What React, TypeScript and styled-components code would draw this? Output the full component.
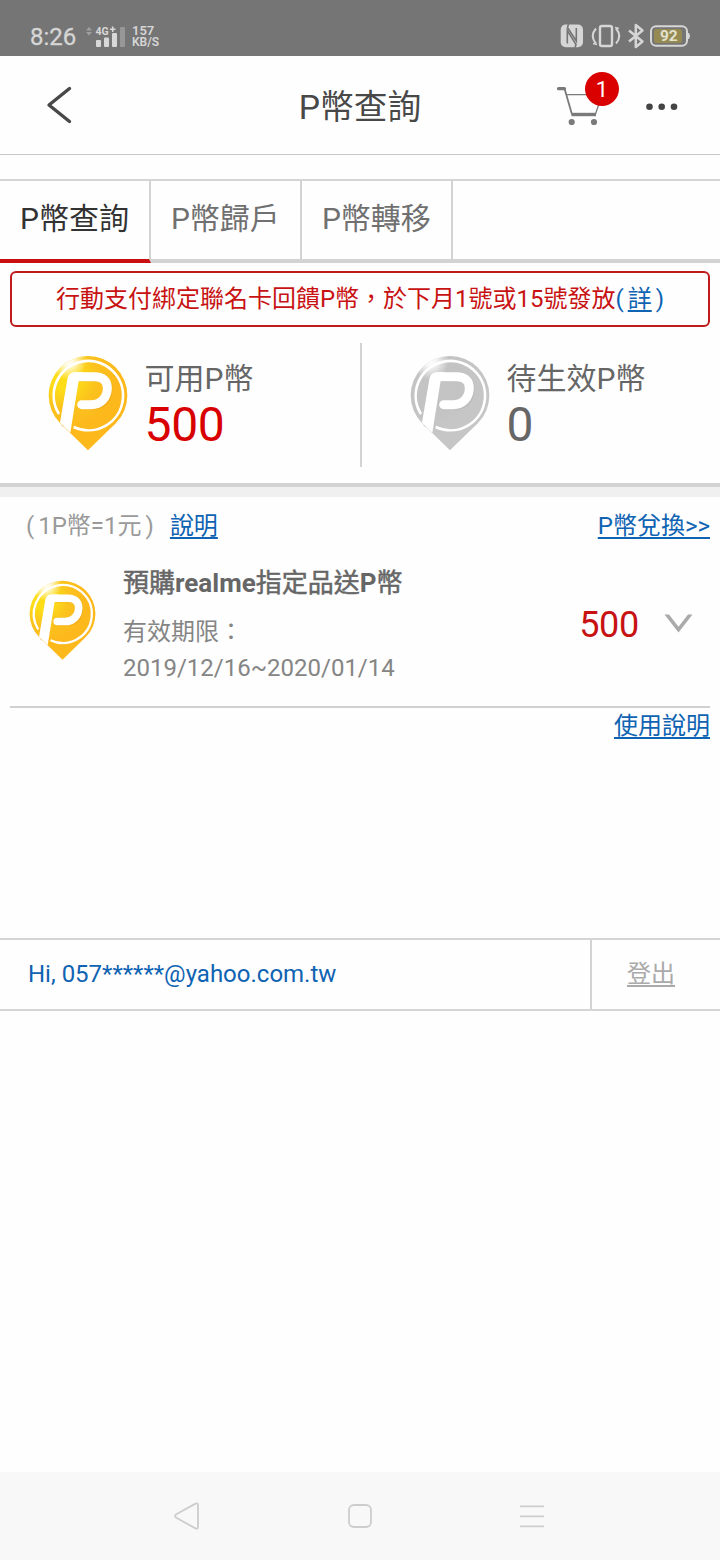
import React, { useId } from 'react';
import styled, { createGlobalStyle } from 'styled-components';

const GlobalStyle = createGlobalStyle`
  *, *::before, *::after { box-sizing: border-box; }
  body {
    margin: 0;
    background: #fefefe;
    font-family: Roboto, 'Noto Sans CJK TC', sans-serif;
    -webkit-font-smoothing: antialiased;
  }
`;

const Screen = styled.div`
  width: 720px;
  height: 1560px;
  display: flex;
  flex-direction: column;
  background: #fefefe;
  overflow: hidden;
  white-space: nowrap;
`;

const StatusBar = styled.div`
  height: 56px;
  flex: none;
  display: flex;
  justify-content: space-between;
  align-items: flex-start;
  padding: 23px 29px 0 30px;
  background: #757575;
  color: #d6d6d6;
`;

const StatusGroup = styled.div`
  display: flex;
`;

const Clock = styled.span`
  width: 55px;
  font-size: 24px;
  line-height: 29px;
  -webkit-text-stroke: 0.3px currentColor;
`;

const NetSpeed = styled.div`
  margin: 2px 0 0 7px;
  font-weight: 600;
  font-size: 13px;
  line-height: 11px;
  span { display: block; }
  span + span { font-size: 12px; line-height: 12px; }
`;

const Header = styled.header`
  height: 99px;
  flex: none;
  display: grid;
  grid-template-columns: 220px 1fr 220px;
  align-items: center;
  border-bottom: 1px solid #c8c8c8;
`;

const BackButton = styled.button`
  border: 0;
  background: none;
  padding: 0;
  margin-left: 46px;
  width: 28px;
  height: 40px;
  svg { display: block; }
`;

const Title = styled.h1`
  margin: 0;
  text-align: center;
  font-size: 33.7px;
  line-height: 40px;
  font-weight: 400;
  color: #484848;
  padding-top: 5px;
`;

const HeaderActions = styled.div`
  display: flex;
  height: 98px;
  padding-left: 55px;
`;

const CartButton = styled.div`
  position: relative;
  width: 66px;
  height: 98px;
  svg { display: block; margin-top: 28px; }
`;

const CartBadge = styled.span`
  position: absolute;
  left: 30px;
  top: 16px;
  width: 34px;
  height: 34px;
  border-radius: 50%;
  background: #da0000;
  color: #fff;
  font-size: 22px;
  line-height: 35px;
  text-align: center;
`;

const MoreIcon = styled.svg`
  margin: 46px 0 0 24px;
`;

const Tabs = styled.nav`
  height: 84px;
  flex: none;
  margin-top: 24px;
  display: flex;
  border-top: 2px solid #d5d5d5;
`;

const Tab = styled.div<{ $active?: boolean }>`
  height: 82px;
  padding: 0 20px;
  border-right: 2px solid #d3d3d3;
  border-bottom: 4px solid ${(p) => (p.$active ? '#c90f0f' : '#d3d3d3')};
  color: ${(p) => (p.$active ? '#333' : '#707070')};
  font-size: 30px;
  line-height: 76px;
`;

const TabFiller = styled.div`
  flex: 1;
  border-bottom: 4px solid #d3d3d3;
`;

const Notice = styled.div`
  height: 56px;
  flex: none;
  margin: 8px 10px 0;
  border: 2px solid #c01a1a;
  border-radius: 6px;
  text-align: center;
  font-size: 24px;
  line-height: 53px;
  color: #c81212;
`;

const NoticeDetail = styled.span`
  color: #0f63b3;
  a { margin: 0 4px; }
`;

const Link = styled.a`
  color: #0f63b3;
  text-decoration: underline;
  text-decoration-thickness: 2px;
  text-underline-offset: 3px;
`;

const Balances = styled.section`
  height: 160px;
  flex: none;
  display: flex;
  align-items: flex-start;
  padding-top: 16px;
  border-bottom: 4px solid #d3d3d3;
`;

const Balance = styled.div`
  width: 360px;
  height: 124px;
  display: flex;
  padding: 12px 0 0 48px;
  gap: 16.5px;
  & + & {
    border-left: 2px solid #d3d3d3;
  }
`;

const BalanceText = styled.div`
  padding-top: 4px;
`;

const BalanceLabel = styled.div`
  font-size: 30px;
  line-height: 40px;
  color: #666;
`;

const BalanceValue = styled.div<{ $accent?: boolean }>`
  margin-top: 1px;
  font-size: 48px;
  line-height: 50px;
  letter-spacing: -0.3px;
  color: ${(p) => (p.$accent ? '#d80000' : '#666')};
`;

const Band = styled.div`
  height: 10px;
  flex: none;
  background: #f0f0f0;
`;

const RateRow = styled.div`
  height: 57px;
  flex: none;
  display: flex;
  justify-content: space-between;
  padding: 0 10px 0 26px;
  font-size: 24px;
  line-height: 58px;
  color: #9a9a9a;
`;

const RateText = styled.span`
  margin: 0 4px;
`;

const RateLink = styled(Link)`
  margin-left: 16px;
`;

const CoinItem = styled.article`
  height: 154px;
  flex: none;
  margin: 0 10px;
  display: flex;
  border-bottom: 2px solid #d0d0d0;
`;

const ItemIcon = styled.div`
  width: 113px;
  padding: 26px 0 0 19px;
`;

const ItemBody = styled.div`
  flex: 1;
  padding-top: 11px;
  font-size: 24px;
  line-height: 36px;
  color: #858585;
`;

const ItemTitle = styled.h2`
  margin: 0 0 13px;
  font-size: 26px;
  line-height: 36px;
  font-weight: 700;
  color: #666;
`;

const Han = styled.span`
  font-weight: 400;
  -webkit-text-stroke: 0.5px currentColor;
`;

const ItemAmount = styled.div`
  padding: 51px 25px 0 0;
  font-size: 36px;
  line-height: 40px;
  letter-spacing: -0.3px;
  color: #c81212;
`;

const Chevron = styled.svg`
  margin: 60px 17px 0 0;
`;

const UsageRow = styled.div`
  flex: none;
  height: 230px;
  padding-right: 10px;
  text-align: right;
  font-size: 24px;
  line-height: 37px;
`;

const Account = styled.footer`
  height: 73px;
  flex: none;
  display: flex;
  border-top: 2px solid #d5d5d5;
  border-bottom: 2px solid #d5d5d5;
  font-size: 24px;
  line-height: 68px;
`;

const AccountName = styled.div`
  width: 592px;
  padding-left: 28px;
  border-right: 2px solid #d3d3d3;
  color: #0f63b3;
`;

const Logout = styled.a`
  flex: 1;
  padding-left: 35px;
  color: #aaa;
  text-decoration: underline;
  text-decoration-thickness: 2px;
  text-underline-offset: 3px;
`;

const SystemNav = styled.div`
  margin-top: auto;
  height: 88px;
  flex: none;
  background: #f8f8f8;
  display: flex;
  justify-content: space-between;
  align-items: center;
  padding: 0 175px 0 172px;
`;

function CoinPin({ width, muted }: { width: number; muted?: boolean }) {
  const id = useId().replace(/:/g, '');
  const light = muted ? '#c4c4c4' : '#fddd18';
  const mid = muted ? '#c3c3c3' : '#fbc21d';
  const deep = muted ? '#c6c6c6' : '#fdb81c';
  const shade = muted ? '#acacac' : '#e39a14';
  return (
    <svg width={width} height={width * 1.2} viewBox="145 45 240 288">
      <defs>
        <radialGradient id={`${id}b`} gradientUnits="userSpaceOnUse" cx="195" cy="110" r="160">
          <stop offset="0" stopColor={light} />
          <stop offset="0.25" stopColor={light} />
          <stop offset="0.6" stopColor={mid} />
          <stop offset="1" stopColor={deep} />
        </radialGradient>
        <radialGradient id={`${id}h`} gradientUnits="userSpaceOnUse" cx="205" cy="62" r="56">
          <stop offset="0" stopColor="#fff" />
          <stop offset="0.3" stopColor="#fff" stopOpacity="0.85" />
          <stop offset="1" stopColor="#fff" stopOpacity="0" />
        </radialGradient>
      </defs>
      <path d="M265 331 L181.500 249.500 A118 118 0 1 1 348.500 249.500 Z" fill={`url(#${id}b)`} />
      <path d="M178 222 A104 104 0 1 1 222 261" fill="none" stroke="#fff" strokeWidth="8" />
      <path d="M265 331 L181.500 249.500 A118 118 0 1 1 348.500 249.500 Z" fill={`url(#${id}h)`} />
      <g opacity="0.35" fill="none" stroke={shade} strokeWidth="27">
        <path d="M232 112 H287 Q325 112 325 148 Q325 196 276 196 H248" strokeLinecap="round" />
        <path d="M224 112 L199 262" />
      </g>
      <path d="M203 118 Q206 97 226 97 H250 L237 122 L212 278 L181 248 Z" fill="#fff" />
      <path d="M226 110 H285 C309 110 323 123 323 144 C323 174 302 194 274 194 H246" fill="none" stroke="#fff" strokeWidth="27" strokeLinecap="round" />
    </svg>
  );
}

const SignalIcon = () => (
  <svg width="40" height="26" viewBox="85 22 40 26">
    <path d="M86 29.500 L89 26 L92 29.500 Z M86 31 L89 34.500 L92 31 Z" fill="#a0a0a0" />
    <text x="95.500" y="34" fontSize="10.500" fontWeight="700" fontFamily="Roboto" fill="#d8d8d8">4G</text>
    <path d="M112.700 25.500 V31 M110 28.200 H115.500" stroke="#d8d8d8" strokeWidth="1.600" />
    <rect x="96" y="39" width="5" height="7" rx="1" fill="#d8d8d8" />
    <rect x="104" y="36.500" width="5" height="9.500" rx="1" fill="#d8d8d8" />
    <rect x="112" y="32" width="5" height="14" rx="1" fill="#d8d8d8" />
    <rect x="120" y="26" width="5" height="20" rx="1" fill="#979797" />
  </svg>
);

const StatusIcons = () => (
  <svg width="131" height="28" viewBox="560 23 131 28">
    <rect x="560.700" y="24.500" width="22.300" height="22.800" rx="5" fill="#d6d6d6" />
    <path d="M567.300 43.500 V30.500 L576 44.500 L575 47.500 M576.300 28 V41 L567.500 27.500 L568.500 24" fill="none" stroke="#757575" strokeWidth="1.600" />
    <g fill="none" stroke="#d6d6d6">
      <rect x="600" y="26" width="12" height="20" rx="2" strokeWidth="2.400" />
      <path d="M596 28.500 Q589.500 36 596 43.500 M616 28.500 Q622.500 36 616 43.500" strokeWidth="2" />
      <path d="M597 44.500 L593 43.500 M615 27.500 L619 28.500" strokeWidth="1.600" />
      <path d="M629 30.500 L642.500 41.500 L635.800 47 V25 L642.500 30.500 L629 41.500" strokeWidth="2.500" strokeLinejoin="round" />
      <rect x="651" y="26.200" width="36" height="19.600" rx="5" strokeWidth="2" />
    </g>
    <rect x="654" y="29" width="28" height="14" rx="2.500" fill="#958b52" />
    <path d="M688.500 33 Q690.500 36 688.500 39 Z" fill="#d6d6d6" stroke="#d6d6d6" />
    <text x="668.800" y="41.300" textAnchor="middle" fontSize="15.500" fontWeight="700" fontFamily="Roboto" fill="#e3e1d0">92</text>
  </svg>
);

const CartIcon = () => (
  <svg width="46" height="44" viewBox="555 84 46 44">
    <g fill="none" stroke="#7a7a7a">
      <path d="M558.500 88.700 H564.500" strokeWidth="3.200" strokeLinecap="round" />
      <path d="M564.500 88.500 L572 114.500" strokeWidth="1.800" />
      <path d="M567 94.700 H602 L595.500 114" strokeWidth="1.300" />
      <path d="M571.500 114.500 H596" strokeWidth="3.400" />
    </g>
    <circle cx="571.700" cy="122" r="3.100" fill="#7a7a7a" />
    <circle cx="594" cy="122" r="3.100" fill="#7a7a7a" />
  </svg>
);

export default function App() {
  return (
    <>
      <GlobalStyle />
      <Screen>
        <StatusBar>
          <StatusGroup>
            <Clock>8:26</Clock>
            <SignalIcon />
            <NetSpeed>
              <span>157</span>
              <span>KB/S</span>
            </NetSpeed>
          </StatusGroup>
          <StatusIcons />
        </StatusBar>

        <Header>
          <BackButton aria-label="返回">
            <svg width="28" height="40" viewBox="46 85 28 40">
              <path d="M69.500 88.500 L49 105 L69.500 121.500" fill="none" stroke="#484848" strokeWidth="3.400" strokeLinecap="round" strokeLinejoin="round" />
            </svg>
          </BackButton>
          <Title>P幣查詢</Title>
          <HeaderActions>
            <CartButton>
              <CartIcon />
              <CartBadge>1</CartBadge>
            </CartButton>
            <MoreIcon width="34" height="9" viewBox="0 0 34 9">
              <circle cx="4.500" cy="4.800" r="3.300" fill="#444" />
              <circle cx="16.700" cy="4.800" r="3.300" fill="#444" />
              <circle cx="29" cy="4.800" r="3.300" fill="#444" />
            </MoreIcon>
          </HeaderActions>
        </Header>

        <Tabs>
          <Tab $active>P幣查詢</Tab>
          <Tab>P幣歸戶</Tab>
          <Tab>P幣轉移</Tab>
          <TabFiller />
        </Tabs>

        <Notice>
          行動支付綁定聯名卡回饋P幣，於下月1號或15號發放
          <NoticeDetail>(<Link>詳</Link>)</NoticeDetail>
        </Notice>

        <Balances>
          <Balance>
            <CoinPin width={80} />
            <BalanceText>
              <BalanceLabel>可用P幣</BalanceLabel>
              <BalanceValue $accent>500</BalanceValue>
            </BalanceText>
          </Balance>
          <Balance>
            <CoinPin width={80} muted />
            <BalanceText>
              <BalanceLabel>待生效P幣</BalanceLabel>
              <BalanceValue>0</BalanceValue>
            </BalanceText>
          </Balance>
        </Balances>
        <Band />

        <RateRow>
          <span>
            (<RateText>1P幣=1元</RateText>)<RateLink>說明</RateLink>
          </span>
          <Link>P幣兌換&gt;&gt;</Link>
        </RateRow>

        <CoinItem>
          <ItemIcon>
            <CoinPin width={67} />
          </ItemIcon>
          <ItemBody>
            <ItemTitle>
              <Han>預購</Han>realme<Han>指定品送</Han>P<Han>幣</Han>
            </ItemTitle>
            <div>有效期限：</div>
            <div>2019/12/16~2020/01/14</div>
          </ItemBody>
          <ItemAmount>500</ItemAmount>
          <Chevron width="29" height="20" viewBox="0 0 29 20">
            <path d="M0.500 0.500 H5 L14.500 12.800 L24 0.500 H28.500 L14.500 18.500 Z" fill="#aaa" />
          </Chevron>
        </CoinItem>

        <UsageRow>
          <Link>使用說明</Link>
        </UsageRow>

        <Account>
          <AccountName>Hi, 057******@yahoo.com.tw</AccountName>
          <Logout>登出</Logout>
        </Account>

        <SystemNav>
          <svg width="28" height="28" viewBox="0 0 28 28" fill="none" stroke="#cdcdcd" strokeWidth="1.800">
            <path d="M23.500 1.600 Q26 0.500 26 3.300 V24.700 Q26 27.500 23.500 26.400 L4.300 15.800 Q1.800 14 4.300 12.200 Z" />
          </svg>
          <svg width="26" height="26" viewBox="0 0 26 26" fill="none" stroke="#cdcdcd" strokeWidth="1.800">
            <rect x="2" y="2" width="22" height="22" rx="5" />
          </svg>
          <svg width="26" height="26" viewBox="0 0 26 26" fill="none" stroke="#cdcdcd" strokeWidth="1.800">
            <path d="M1 3.300 H25 M1 13.300 H25 M1 23.300 H25" />
          </svg>
        </SystemNav>
      </Screen>
    </>
  );
}
